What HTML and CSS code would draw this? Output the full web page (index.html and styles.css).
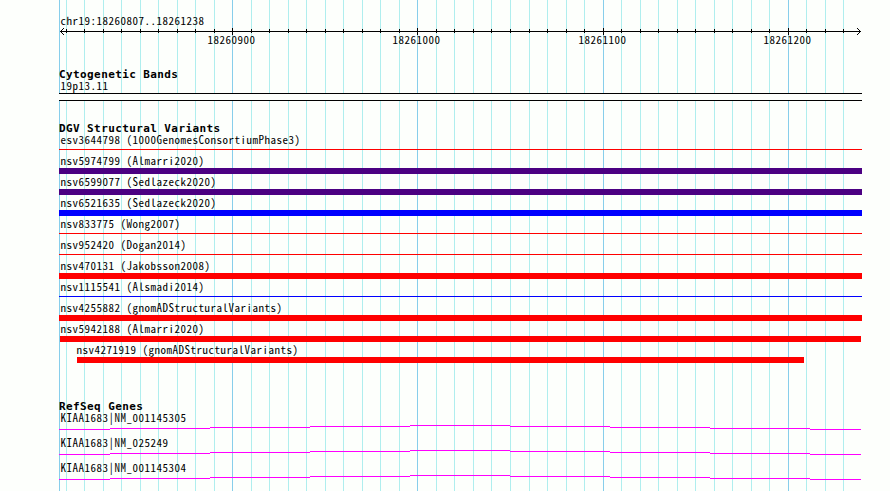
FILE: index.html
```html
<!DOCTYPE html>
<html>
<head>
  <meta charset="UTF-8">
  <title>chr19:18260807..18261238</title>
  <link rel="stylesheet" href="styles.css">
</head>
<body>

  <!-- vertical guide lines behind all tracks -->
  <svg class="grid" width="890" height="491">
    <path class="minor" d="M66.5 0v491M84.5 0v491M103.5 0v491M121.5 0v491M140.5 0v491M158.5 0v491M177.5 0v491M195.5 0v491M214.5 0v491M251.5 0v491M269.5 0v491M288.5 0v491M306.5 0v491M325.5 0v491M343.5 0v491M362.5 0v491M380.5 0v491M399.5 0v491M436.5 0v491M454.5 0v491M473.5 0v491M491.5 0v491M510.5 0v491M529.5 0v491M547.5 0v491M566.5 0v491M584.5 0v491M621.5 0v491M640.5 0v491M658.5 0v491M677.5 0v491M695.5 0v491M714.5 0v491M732.5 0v491M751.5 0v491M769.5 0v491M806.5 0v491M825.5 0v491M843.5 0v491"/>
    <path class="major" d="M59.5 0v491M232.5 0v491M417.5 0v491M603.5 0v491M788.5 0v491"/>
  </svg>

  <div class="panel">
    <div class="ruler">
      <div class="label">chr19:18260807..18261238</div>
      <svg class="scale" width="803" height="20" viewBox="59 28 803 20">
        <path d="M60 31.5H861M63.5 28v1M62.5 29v1M61.5 30v1M60.5 31v1M61.5 32v1M62.5 33v1M63.5 34v1M857.5 28v1M858.5 29v1M859.5 30v1M860.5 31v1M859.5 32v1M858.5 33v1M857.5 34v1"/>
        <path d="M66.5 29v4M84.5 29v4M103.5 29v4M121.5 29v4M140.5 29v4M158.5 29v4M177.5 29v4M195.5 29v4M214.5 29v4M251.5 29v4M269.5 29v4M288.5 29v4M306.5 29v4M325.5 29v4M343.5 29v4M362.5 29v4M380.5 29v4M399.5 29v4M436.5 29v4M454.5 29v4M473.5 29v4M491.5 29v4M510.5 29v4M529.5 29v4M547.5 29v4M566.5 29v4M584.5 29v4M621.5 29v4M640.5 29v4M658.5 29v4M677.5 29v4M695.5 29v4M714.5 29v4M732.5 29v4M751.5 29v4M769.5 29v4M806.5 29v4M825.5 29v4M843.5 29v4"/>
        <path d="M232.5 28v7M417.5 28v7M603.5 28v7M788.5 28v7"/>
        <text x="207.5" y="44">18260900</text>
        <text x="392.5" y="44">18261000</text>
        <text x="578.5" y="44">18261100</text>
        <text x="763.5" y="44">18261200</text>
      </svg>
    </div>

    <div class="track cytoband">
      <h2>Cytogenetic Bands</h2>
      <div class="label">19p13.11</div>
      <div class="band"></div>
    </div>

    <div class="track variants">
      <h2>DGV Structural Variants</h2>
      <div class="feature"><div class="label">esv3644798 (1000GenomesConsortiumPhase3)</div><div class="bar thin red"></div></div>
      <div class="feature"><div class="label">nsv5974799 (Almarri2020)</div><div class="bar indigo"></div></div>
      <div class="feature"><div class="label">nsv6599077 (Sedlazeck2020)</div><div class="bar indigo"></div></div>
      <div class="feature"><div class="label">nsv6521635 (Sedlazeck2020)</div><div class="bar blue"></div></div>
      <div class="feature"><div class="label">nsv833775 (Wong2007)</div><div class="bar thin red"></div></div>
      <div class="feature"><div class="label">nsv952420 (Dogan2014)</div><div class="bar thin red"></div></div>
      <div class="feature"><div class="label">nsv470131 (Jakobsson2008)</div><div class="bar red"></div></div>
      <div class="feature"><div class="label">nsv1115541 (Alsmadi2014)</div><div class="bar thin blue"></div></div>
      <div class="feature"><div class="label">nsv4255882 (gnomADStructuralVariants)</div><div class="bar red"></div></div>
      <div class="feature"><div class="label">nsv5942188 (Almarri2020)</div><div class="bar red inset"></div></div>
      <div class="feature partial"><div class="label">nsv4271919 (gnomADStructuralVariants)</div><div class="bar red"></div></div>
    </div>

    <div class="track genes">
      <h2>RefSeq Genes</h2>
      <div class="gene">
        <div class="label">KIAA1683|NM_001145305</div>
        <svg class="intron" width="803" height="5"><path d="M0 4.5H51M51 3.5H151M151 2.5H251M251 1.5H351M351 .5H451M451 1.5H551M551 2.5H651M651 3.5H751M751 4.5H802"/></svg>
      </div>
      <div class="gene">
        <div class="label">KIAA1683|NM_025249</div>
        <svg class="intron" width="803" height="5"><path d="M0 4.5H51M51 3.5H151M151 2.5H251M251 1.5H351M351 .5H451M451 1.5H551M551 2.5H651M651 3.5H751M751 4.5H802"/></svg>
      </div>
      <div class="gene">
        <div class="label">KIAA1683|NM_001145304</div>
        <svg class="intron" width="803" height="5"><path d="M0 4.5H51M51 3.5H151M151 2.5H251M251 1.5H351M351 .5H451M451 1.5H551M551 2.5H651M651 3.5H751M751 4.5H802"/></svg>
      </div>
    </div>
  </div>

</body>
</html>
```
FILE: styles.css
```css
body {
  margin: 0;
  height: 491px;
  overflow: hidden;
  background: #fdfffc;
  color: #000;
  font-family: "Noto Sans CJK SC", "DejaVu Sans Mono", monospace;
  font-feature-settings: "hwid";
  font-size: 11px;
  letter-spacing: 0.5px;
}
svg {
  display: block;
}
path {
  fill: none;
  stroke: #000;
  shape-rendering: crispEdges;
}
.grid {
  position: absolute;
  top: 0;
  left: 0;
  z-index: -1;
}
.grid .minor {
  stroke: #afeeee;
}
.grid .major {
  stroke: #87ceeb;
}
.panel {
  width: 803px;
  padding: 15px 0 0 59px;
}
.label {
  height: 13px;
  line-height: 10px;
  padding-left: 1.5px;
  box-sizing: border-box;
  white-space: pre;
}
.track h2 {
  margin: 0;
  height: 12px;
  line-height: 14px;
  font-family: "DejaVu Sans Mono", monospace;
  font-size: 11px;
  font-weight: bold;
  letter-spacing: 0.4px;
}
.cytoband {
  margin-top: 20px;
}
.band {
  height: 6px;
  border: solid #000;
  border-width: 1px 0;
  background: #fdfffc;
}
.variants {
  margin-top: 21px;
}
.feature {
  height: 21px;
}
.bar {
  height: 6px;
}
.bar.thin {
  height: 1px;
  margin-top: 2px;
}
.bar.inset {
  margin: 0 1px;
}
.partial {
  width: 727px;
  margin-left: 18px;
}
.partial .label {
  padding-left: 0;
  margin-left: -0.5px;
}
.red {
  background: #f00;
}
.blue {
  background: #00f;
}
.indigo {
  background: #4b0082;
}
.genes {
  margin-top: 35px;
}
.gene {
  height: 25px;
}
.intron path {
  stroke: #f0f;
}
```
